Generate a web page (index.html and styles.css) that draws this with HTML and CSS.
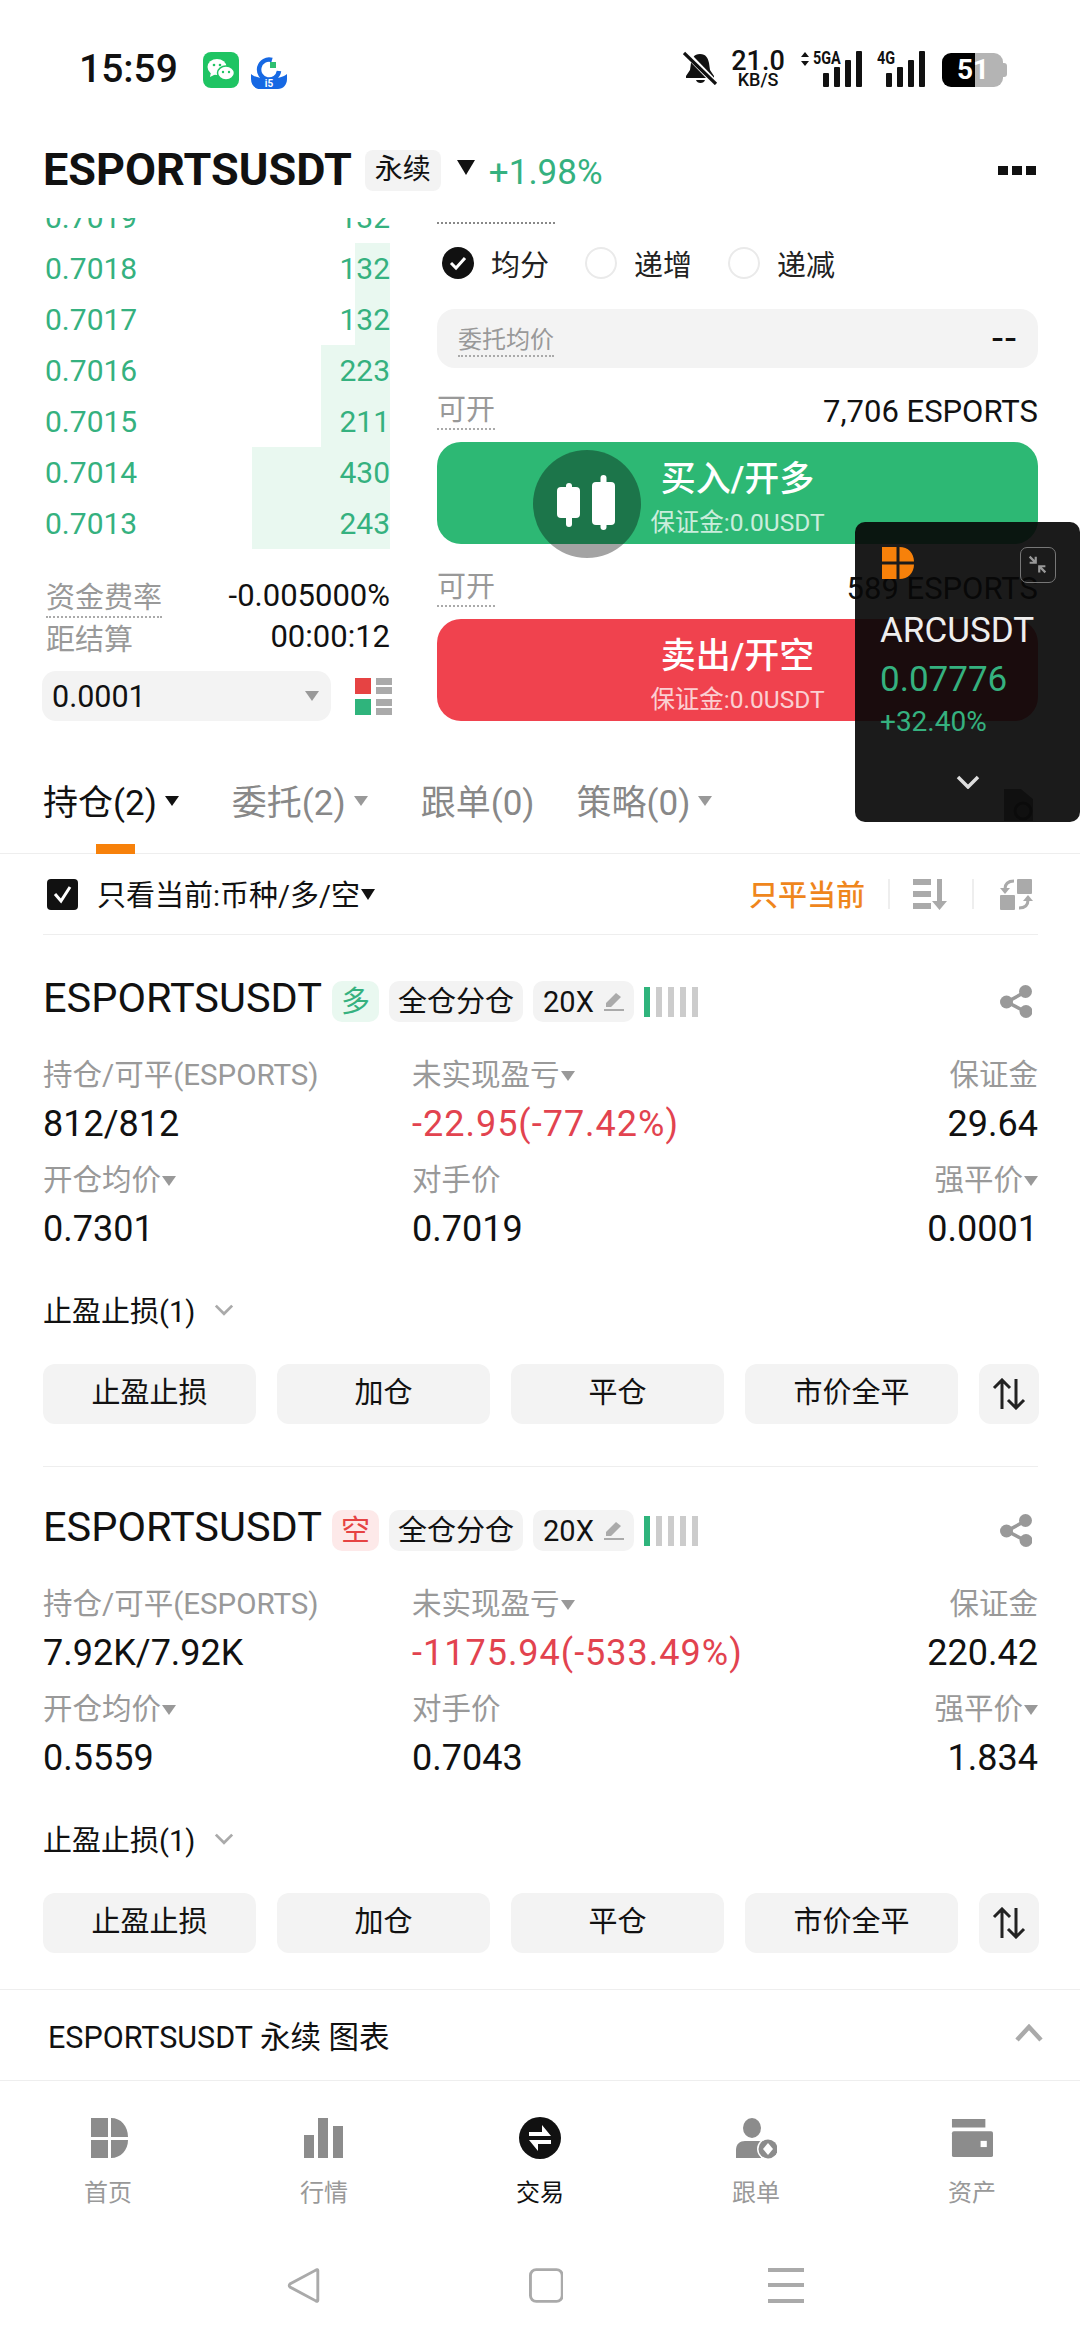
FILE: index.html
```html
<!DOCTYPE html>
<html lang="zh-CN">
<head>
    <meta charset="UTF-8">
    <meta name="viewport" content="width=device-width, initial-scale=1.0">
    <title>ESPORTSUSDT 永续</title>
    <link rel="stylesheet" href="styles.css">
</head>
<body>
<div id="page">

    <!-- 状态栏 -->
    <div class="status">
        <span class="clock">15:59</span>
        <svg class="app-wechat" viewBox="0 0 36 36">
            <rect width="36" height="36" rx="8" fill="#1fc463"/>
            <ellipse cx="14" cy="15" rx="9.5" ry="8" fill="#fff"/>
            <path d="M8 20l-1 5 6-3z" fill="#fff"/>
            <ellipse cx="23" cy="21" rx="8.5" ry="7" fill="#fff" stroke="#1fc463" stroke-width="1.5"/>
            <circle cx="11" cy="13" r="1.3" fill="#1fc463"/>
            <circle cx="17" cy="13" r="1.3" fill="#1fc463"/>
            <circle cx="20" cy="20" r="1.2" fill="#1fc463"/>
            <circle cx="26" cy="20" r="1.2" fill="#1fc463"/>
        </svg>
        <svg class="app-blue" viewBox="0 0 36 32">
            <path d="M21 3a10 10 0 1 0 7 11" fill="none" stroke="#1668e3" stroke-width="4.5"/>
            <rect x="19" y="5" width="6" height="6" fill="#2fbf71"/>
            <path d="M0 17c6 6 30 6 36 0v5c0 6-4 10-9 10H9c-5 0-9-4-9-10z" fill="#1668e3"/>
            <text x="18" y="30" text-anchor="middle" class="app-blue-txt">i5</text>
        </svg>
        <div class="status-right">
            <svg class="ic-bell" viewBox="0 0 35 34">
                <path d="M17 3c-6 0-8 4-9 9l-1 7-4 6v2h28v-2l-4-6-1-7c-1-5-3-9-9-9z" fill="#111"/>
                <path d="M13 29h9c-1 4-8 4-9 0z" fill="#111"/>
                <path d="M2 1l31 32" stroke="#fff" stroke-width="6"/>
                <path d="M1 2l32 31" stroke="#111" stroke-width="3.2"/>
            </svg>
            <div class="speed"><b>21.0</b><span>KB/S</span></div>
            <div class="signal sig-5g">
                <svg class="sig-arrows" viewBox="0 0 10 14"><path d="M5 0l4 5H1zM5 14L1 9h8z" fill="#111"/></svg>
                <span class="sig-name">5GA</span>
                <i class="b1"></i><i class="b2"></i><i class="b3"></i><i class="b4"></i>
            </div>
            <div class="signal sig-4g">
                <span class="sig-name">4G</span>
                <i class="b1"></i><i class="b2"></i><i class="b3"></i><i class="b4"></i>
            </div>
            <div class="battery"><span>51</span></div>
        </div>
    </div>

    <!-- 合约标题 -->
    <div class="head">
        <h1 class="symbol">ESPORTSUSDT</h1>
        <span class="perp">永续</span>
        <i class="tri tri-head"></i>
        <span class="change">+1.98%</span>
        <div class="more"><i></i><i></i><i></i></div>
    </div>

    <!-- 盘口和下单 -->
    <div class="trade">
        <div class="left">
            <div class="book">
                <div class="row"><span>0.7019</span><span>132</span></div>
                <div class="row"><i class="depth" style="width:35px"></i><span>0.7018</span><span>132</span></div>
                <div class="row"><i class="depth" style="width:35px"></i><span>0.7017</span><span>132</span></div>
                <div class="row"><i class="depth" style="width:69px"></i><span>0.7016</span><span>223</span></div>
                <div class="row"><i class="depth" style="width:69px"></i><span>0.7015</span><span>211</span></div>
                <div class="row"><i class="depth" style="width:138px"></i><span>0.7014</span><span>430</span></div>
                <div class="row"><i class="depth" style="width:138px"></i><span>0.7013</span><span>243</span></div>
            </div>
            <div class="fund fund-rate">
                <span class="dash">资金费率</span><span class="fund-v">-0.005000%</span>
            </div>
            <div class="fund">
                <span class="gray">距结算</span><span class="fund-v">00:00:12</span>
            </div>
            <div class="depth-bar">
                <div class="select"><span>0.0001</span><i class="tri tri-select"></i></div>
                <div class="book-mode">
                    <i class="sq red"></i><i class="lines"></i>
                    <i class="sq green"></i><i class="lines"></i>
                </div>
            </div>
        </div>

        <div class="right">
            <div class="cut-line"></div>
            <div class="radios">
                <div class="radio">
                    <svg class="radio-on" viewBox="0 0 32 32">
                        <circle cx="16" cy="16" r="16" fill="#111"/>
                        <path d="M9 16l5 5 9-10" fill="none" stroke="#fff" stroke-width="3"/>
                    </svg>
                    <span>均分</span>
                </div>
                <div class="radio"><i class="radio-off"></i><span>递增</span></div>
                <div class="radio"><i class="radio-off"></i><span>递减</span></div>
            </div>
            <div class="avg">
                <span class="dash">委托均价</span><span class="avg-val">--</span>
            </div>
            <div class="avail">
                <span class="dash">可开</span><span class="avail-v">7,706 ESPORTS</span>
            </div>
            <div class="action buy">
                <span class="action-title">买入/开多</span>
                <span class="action-sub">保证金:0.0USDT</span>
            </div>
            <div class="avail avail-2">
                <span class="dash">可开</span><span class="avail-v">589 ESPORTS</span>
            </div>
            <div class="action sell">
                <span class="action-title">卖出/开空</span>
                <span class="action-sub">保证金:0.0USDT</span>
            </div>
        </div>
    </div>

    <!-- 持仓切换 -->
    <div class="tabs">
        <div class="tab on">持仓(2)<i class="tri tri-tab"></i></div>
        <div class="tab">委托(2)<i class="tri tri-tab"></i></div>
        <div class="tab">跟单(0)</div>
        <div class="tab">策略(0)<i class="tri tri-tab"></i></div>
        <svg class="ic-doc" viewBox="0 0 29 32">
            <path d="M0 0h17l12 10v22H0z" fill="#777"/>
            <circle cx="19" cy="22" r="8" fill="none" stroke="#333" stroke-width="3"/>
        </svg>
        <i class="tab-mark"></i>
    </div>

    <div class="filter">
        <svg class="check" viewBox="0 0 31 31">
            <rect width="31" height="31" rx="4" fill="#111"/>
            <path d="M8 15l6 7 9-14" fill="none" stroke="#fff" stroke-width="3"/>
        </svg>
        <span class="filter-txt">只看当前:币种/多/空</span>
        <i class="tri tri-filter"></i>
        <span class="close-cur">只平当前</span>
        <i class="vline"></i>
        <svg class="ic-sort" viewBox="0 0 34 31">
            <path d="M0 0h18v6H0zM0 12h18v6H0zM0 24h18v6H0z" fill="#aaa"/>
            <path d="M24 0h5v22h5l-7.500 9-7.500-9h5z" fill="#aaa"/>
        </svg>
        <i class="vline vline-2"></i>
        <svg class="ic-swap" viewBox="0 0 33 31">
            <rect x="17" y="0" width="15" height="15" rx="1" fill="#aaa"/>
            <rect x="0" y="16" width="15" height="15" rx="1" fill="#aaa"/>
            <path d="M14 2C8 2 5 5 5 10" fill="none" stroke="#aaa" stroke-width="3"/>
            <path d="M0 9h10l-5 6z" fill="#aaa"/>
            <path d="M19 29c6 0 9-3 9-8" fill="none" stroke="#aaa" stroke-width="3"/>
            <path d="M23 22h10l-5-6z" fill="#aaa"/>
        </svg>
    </div>

    <!-- 多单 -->
    <div class="card card-line">
        <div class="card-top">
            <span class="card-symbol">ESPORTSUSDT</span>
            <span class="tag long">多</span>
            <span class="tag">全仓分仓</span>
            <span class="tag tag-lev">20X
                <svg class="ic-pen" viewBox="0 0 20 18"><path d="M12 0l5 4L7 14H2v-4zM0 16h20v2H0z" fill="#aaa"/></svg>
            </span>
            <div class="adl"><i class="on"></i><i></i><i></i><i></i><i></i></div>
            <svg class="ic-share" viewBox="0 0 32 33">
                <path d="M25 7L7 17l19 10" fill="none" stroke="#999" stroke-width="3.500"/>
                <circle cx="25.500" cy="6.500" r="6.500" fill="#999"/>
                <circle cx="6.500" cy="17" r="6.500" fill="#999"/>
                <circle cx="26" cy="26.500" r="6.500" fill="#999"/>
            </svg>
        </div>
        <div class="stats">
            <div class="stat"><span class="stat-k">持仓/可平(ESPORTS)</span><span class="stat-v">812/812</span></div>
            <div class="stat"><span class="stat-k">未实现盈亏<i class="tri tri-k"></i></span><span class="stat-v loss">-22.95(-77.42%)</span></div>
            <div class="stat stat-r"><span class="stat-k">保证金</span><span class="stat-v">29.64</span></div>
            <div class="stat"><span class="stat-k">开仓均价<i class="tri tri-k"></i></span><span class="stat-v">0.7301</span></div>
            <div class="stat"><span class="stat-k">对手价</span><span class="stat-v">0.7019</span></div>
            <div class="stat stat-r"><span class="stat-k">强平价<i class="tri tri-k"></i></span><span class="stat-v">0.0001</span></div>
        </div>
        <div class="tpsl">止盈止损(1)
            <svg class="ic-down" viewBox="0 0 18 11"><path d="M1.500 1.500L9 9l7.500-7.500" fill="none" stroke="#aaa" stroke-width="2.500"/></svg>
        </div>
        <div class="btns">
            <span class="btn">止盈止损</span>
            <span class="btn">加仓</span>
            <span class="btn">平仓</span>
            <span class="btn">市价全平</span>
            <span class="btn btn-flip">
                <svg viewBox="0 0 34 32"><path d="M10 31V2M2 10l8-8 8 8M24 1v29M16 22l8 8 8-8" fill="none" stroke="#222" stroke-width="3"/></svg>
            </span>
        </div>
    </div>

    <!-- 空单 -->
    <div class="card">
        <div class="card-top">
            <span class="card-symbol">ESPORTSUSDT</span>
            <span class="tag short">空</span>
            <span class="tag">全仓分仓</span>
            <span class="tag tag-lev">20X
                <svg class="ic-pen" viewBox="0 0 20 18"><path d="M12 0l5 4L7 14H2v-4zM0 16h20v2H0z" fill="#aaa"/></svg>
            </span>
            <div class="adl"><i class="on"></i><i></i><i></i><i></i><i></i></div>
            <svg class="ic-share" viewBox="0 0 32 33">
                <path d="M25 7L7 17l19 10" fill="none" stroke="#999" stroke-width="3.500"/>
                <circle cx="25.500" cy="6.500" r="6.500" fill="#999"/>
                <circle cx="6.500" cy="17" r="6.500" fill="#999"/>
                <circle cx="26" cy="26.500" r="6.500" fill="#999"/>
            </svg>
        </div>
        <div class="stats">
            <div class="stat"><span class="stat-k">持仓/可平(ESPORTS)</span><span class="stat-v">7.92K/7.92K</span></div>
            <div class="stat"><span class="stat-k">未实现盈亏<i class="tri tri-k"></i></span><span class="stat-v loss">-1175.94(-533.49%)</span></div>
            <div class="stat stat-r"><span class="stat-k">保证金</span><span class="stat-v">220.42</span></div>
            <div class="stat"><span class="stat-k">开仓均价<i class="tri tri-k"></i></span><span class="stat-v">0.5559</span></div>
            <div class="stat"><span class="stat-k">对手价</span><span class="stat-v">0.7043</span></div>
            <div class="stat stat-r"><span class="stat-k">强平价<i class="tri tri-k"></i></span><span class="stat-v">1.834</span></div>
        </div>
        <div class="tpsl">止盈止损(1)
            <svg class="ic-down" viewBox="0 0 18 11"><path d="M1.500 1.500L9 9l7.500-7.500" fill="none" stroke="#aaa" stroke-width="2.500"/></svg>
        </div>
        <div class="btns">
            <span class="btn">止盈止损</span>
            <span class="btn">加仓</span>
            <span class="btn">平仓</span>
            <span class="btn">市价全平</span>
            <span class="btn btn-flip">
                <svg viewBox="0 0 34 32"><path d="M10 31V2M2 10l8-8 8 8M24 1v29M16 22l8 8 8-8" fill="none" stroke="#222" stroke-width="3"/></svg>
            </span>
        </div>
    </div>

    <div class="chart-row">
        <span>ESPORTSUSDT 永续 图表</span>
        <svg class="ic-up" viewBox="0 0 28 18"><path d="M2 16L14 3l12 13" fill="none" stroke="#aaa" stroke-width="4.500"/></svg>
    </div>

    <!-- 底部导航 -->
    <div class="nav">
        <div class="nav-item">
            <svg class="nav-ic" viewBox="-2 0 42 42">
                <path d="M2 1h17v19H2zM22 1c10 0 17 8 17 19H22zM2 23h17v18H2zM22 23h17c0 10-7 18-17 18z" fill="#8c8c8c"/>
            </svg>
            <span>首页</span>
        </div>
        <div class="nav-item">
            <svg class="nav-ic" viewBox="0 0 42 42">
                <path d="M1 18h10v23H1zM15 1h10v40H15zM30 9h10v32H30z" fill="#8c8c8c"/>
            </svg>
            <span>行情</span>
        </div>
        <div class="nav-item on">
            <svg class="nav-ic" viewBox="0 0 42 42">
                <circle cx="21" cy="21" r="21" fill="#111"/>
                <path d="M10 19v-4h13V8l9 11zM32 23v4H19v7l-9-11z" fill="#fff"/>
            </svg>
            <span>交易</span>
        </div>
        <div class="nav-item">
            <svg class="nav-ic" viewBox="0 0 42 42">
                <ellipse cx="17" cy="11" rx="9" ry="10" fill="#8c8c8c"/>
                <path d="M1 41V33c0-6 4-9 9-9h16v17z" fill="#8c8c8c"/>
                <circle cx="33" cy="32" r="11" fill="#fff"/>
                <circle cx="33" cy="32" r="9.500" fill="#8c8c8c"/>
                <path d="M33 26l5 6-5 6-5-6z" fill="#fff"/>
            </svg>
            <span>跟单</span>
        </div>
        <div class="nav-item">
            <svg class="nav-ic" viewBox="0 0 44 42">
                <path d="M1 1h35v9H1z" fill="#8c8c8c"/>
                <path d="M3 14h39a2 2 0 0 1 2 2v23a2 2 0 0 1-2 2H3a2 2 0 0 1-2-2V16a2 2 0 0 1 2-2z" fill="#8c8c8c"/>
                <rect x="31" y="24" width="6.500" height="6.500" fill="#fff"/>
            </svg>
            <span>资产</span>
        </div>
    </div>

    <!-- 系统按键 -->
    <div class="keys">
        <svg class="key key-back" viewBox="0 0 36 36"><path d="M32 2.500v31a1 1 0 0 1-1.700.7L3 19.500a2 2 0 0 1 0-3L30.300 1.800a1 1 0 0 1 1.700.7z" fill="none" stroke="#aaa" stroke-width="3"/></svg>
        <svg class="key key-home" viewBox="0 0 36 36"><rect x="1.500" y="1.500" width="33" height="33" rx="6" fill="none" stroke="#aaa" stroke-width="3"/></svg>
        <div class="key-menu"><i></i><i></i><i></i></div>
    </div>

    <!-- 悬浮K线按钮 -->
    <div class="float-btn">
        <svg viewBox="0 0 60 58">
            <rect x="9" y="8" width="6" height="44" rx="3" fill="#fff"/>
            <rect x="0" y="12" width="23" height="31" rx="4" fill="#fff"/>
            <rect x="43.500" y="0" width="6" height="55" rx="3" fill="#fff"/>
            <rect x="35" y="7" width="23" height="43" rx="4" fill="#fff"/>
        </svg>
    </div>

    <!-- 悬浮行情窗 -->
    <div class="ticker">
        <div class="ticker-top">
            <svg class="ticker-logo" viewBox="0 0 32 32">
                <path d="M0 0h14.500v14.500H0zM17.500 0C26 0 32 6 32 14.500H17.500zM0 17.500h14.500V32H0zM17.500 17.500H32C32 26 26 32 17.500 32z" fill="#f7810a"/>
            </svg>
            <div class="ticker-shrink">
                <svg viewBox="0 0 24 24"><path d="M3 3l6 6M10 3v7H3M21 21l-6-6M14 21v-7h7" fill="none" stroke="#999" stroke-width="2.500"/></svg>
            </div>
        </div>
        <div class="ticker-name">ARCUSDT</div>
        <div class="ticker-price">0.07776</div>
        <div class="ticker-pct">+32.40%</div>
        <svg class="ticker-down" viewBox="0 0 24 14"><path d="M2 2l10 10L22 2" fill="none" stroke="#ddd" stroke-width="3.500"/></svg>
    </div>
</div>
</body>
</html>
```

FILE: styles.css
```css
*{
    margin: 0;
    padding: 0;
    box-sizing: border-box;
}
body{
    width: 1080px;
    height: 2352px;
    background: #fff;
    font-family: Roboto, "Noto Sans CJK SC", sans-serif;
    color: #111;
    overflow: hidden;
}
i{
    display: block;
    font-style: normal;
}
#page{
    width: 1080px;
    height: 2352px;
    position: relative;
    overflow: hidden;
}
.tri{
    width: 0;
    height: 0;
    border-style: solid;
    border-color: #111 transparent transparent transparent;
}

/* status bar */
.status{
    height: 130px;
    padding: 6px 73px 0 79px;
    display: flex;
    align-items: center;
}
.clock{
    font-size: 39px;
    font-weight: 500;
    width: 124px;
    margin-top: 2px;
}
.app-wechat{
    width: 36px;
    height: 36px;
    margin-top: 4px;
}
.app-blue{
    width: 36px;
    height: 32px;
    margin: 9px 0 0 12px;
}
.app-blue-txt{
    font: 700 10px Roboto, sans-serif;
    fill: #fff;
}
.status-right{
    margin-left: auto;
    display: flex;
    align-items: center;
}
.ic-bell{
    width: 35px;
    height: 34px;
}
.speed{
    width: 50px;
    margin-left: 15px;
    display: flex;
    flex-direction: column;
    align-items: center;
}
.speed b{
    font-size: 27px;
    font-weight: 500;
    height: 24px;
    line-height: 24px;
}
.speed span{
    font-size: 18px;
    font-weight: 500;
    height: 14px;
    line-height: 14px;
}
.signal{
    height: 36px;
    margin-top: 2px;
    display: flex;
    align-items: flex-end;
    position: relative;
    gap: 5px;
    padding-left: 23px;
}
.signal i{
    width: 6px;
    background: #111;
    border-radius: 1px;
}
.signal .b1{ height: 14px; }
.signal .b2{ height: 20px; }
.signal .b3{ height: 27px; }
.signal .b4{ height: 36px; }
.sig-5g{
    margin-left: 17px;
}
.sig-4g{
    margin-left: 15px;
    padding-left: 9px;
}
.sig-arrows{
    position: absolute;
    left: 0;
    top: 1px;
    width: 10px;
    height: 14px;
}
.sig-name{
    position: absolute;
    top: -1px;
    left: 13px;
    font-size: 18px;
    font-weight: 700;
    line-height: 16px;
    transform-origin: left top;
    transform: scaleX(.8);
}
.sig-4g .sig-name{
    left: 0;
}
.battery{
    width: 61px;
    height: 34px;
    margin: 4px 4px 0 17px;
    border-radius: 9px;
    background: linear-gradient(90deg, #000 0, #000 33px, #b4b4b4 33px);
    position: relative;
    color: #fff;
    font-size: 28px;
    font-weight: 700;
    line-height: 34px;
    padding-left: 15px;
}
.battery::after{
    content: "";
    position: absolute;
    right: -4px;
    top: 10px;
    width: 4px;
    height: 14px;
    border-radius: 0 3px 3px 0;
    background: #b4b4b4;
}

/* symbol head */
.head{
    height: 88px;
    padding: 0 44px 8px 43px;
    display: flex;
    align-items: center;
}
.symbol{
    font-size: 45px;
    font-weight: 700;
    line-height: 50px;
}
.perp{
    width: 76px;
    height: 41px;
    margin-left: 13px;
    background: #f3f3f3;
    border-radius: 8px;
    font-size: 28px;
    line-height: 40px;
    text-align: center;
}
.tri-head{
    margin-left: 16px;
    margin-top: -6px;
    border-width: 15px 9px 0 9px;
}
.change{
    margin-left: 14px;
    margin-top: 5px;
    color: #35b17f;
    font-size: 35px;
    font-weight: 400;
}
.more{
    margin-left: auto;
    display: flex;
    gap: 4px;
}
.more i{
    width: 10px;
    height: 9px;
    background: #111;
}

/* order book and order form */
.trade{
    height: 542px;
    padding-left: 43px;
    display: grid;
    grid-template-columns: 347px 601px;
    column-gap: 47px;
    overflow: hidden;
}
.book{
    margin-top: -26px;
}
.row{
    height: 51px;
    padding-left: 2px;
    display: flex;
    justify-content: space-between;
    align-items: center;
    position: relative;
    color: #35b17f;
    font-size: 30px;
}
.row span{
    position: relative;
}
.depth{
    position: absolute;
    right: 0;
    top: 0;
    bottom: 0;
    background: #e9f8f0;
}
.fund{
    height: 41px;
    padding-left: 3px;
    display: flex;
    justify-content: space-between;
    align-items: center;
    font-size: 29px;
}
.fund-v{
    font-size: 31px;
}
.fund-rate{
    margin-top: 26px;
}
.gray{
    color: #999;
}
.dash{
    color: #999;
    border-bottom: 2px dotted #aaa;
}
.depth-bar{
    margin-top: 14px;
    display: flex;
    align-items: center;
    justify-content: space-between;
    margin-left: -1px;
    margin-right: -2px;
}
.select{
    width: 289px;
    height: 50px;
    background: #f3f3f3;
    border-radius: 14px;
    padding: 0 12px 0 10px;
    display: flex;
    align-items: center;
    justify-content: space-between;
    font-size: 30.500px;
}
.tri-select{
    border-width: 10px 7px 0 7px;
    border-top-color: #999;
}
.book-mode{
    width: 37px;
    display: grid;
    grid-template-columns: 16px 16px;
    grid-template-rows: 16px 16px;
    gap: 5px;
}
.sq.red{ background: #e64343; }
.sq.green{ background: #2fb47c; }
.lines{
    background: linear-gradient(#aaa 0, #aaa 7px, #fff 7px, #fff 9px, #aaa 9px);
}

.cut-line{
    margin-top: 4px;
    width: 118px;
    height: 2px;
    border-top: 2px dotted #888;
}
.radios{
    margin-top: 17px;
    height: 44px;
    padding-left: 5px;
    display: flex;
    align-items: center;
    font-size: 29px;
}
.radio{
    width: 143px;
    display: flex;
    align-items: center;
    gap: 17px;
    color: #222;
}
.radio-on{
    width: 32px;
    height: 32px;
}
.radio-off{
    width: 32px;
    height: 32px;
    border: 2px solid #eaeaea;
    border-radius: 50%;
}
.avg{
    margin-top: 24px;
    height: 59px;
    padding: 0 20px 0 21px;
    background: #f3f3f3;
    border-radius: 18px;
    display: flex;
    justify-content: space-between;
    align-items: center;
    font-size: 24px;
}
.avg-val{
    font-size: 40px;
    line-height: 40px;
    letter-spacing: 2px;
}
.avail{
    margin-top: 24px;
    height: 38px;
    display: flex;
    justify-content: space-between;
    align-items: flex-end;
    font-size: 29px;
    line-height: 36px;
}
.avail-2{
    margin-top: 25px;
}
.avail-v{
    font-size: 31px;
}
.action{
    margin-top: 12px;
    height: 102px;
    padding-top: 16px;
    border-radius: 24px;
    color: #fff;
    display: flex;
    flex-direction: column;
    align-items: center;
}
.action-title{
    font-size: 35px;
    font-weight: 500;
    line-height: 43px;
}
.action-sub{
    font-size: 24.500px;
    line-height: 43px;
    opacity: .75;
}
.buy{ background: #2db874; }
.sell{ background: #f0424e; }

/* position tabs */
.tabs{
    height: 94px;
    padding: 0 47px 15px 43px;
    border-bottom: 1.5px solid #eee;
    display: flex;
    align-items: center;
    gap: 42px;
    position: relative;
    font-size: 35px;
    color: #888;
}
.tab{
    display: flex;
    align-items: center;
}
.tab.on{
    color: #111;
}
.tri-tab{
    margin: 4px 11px 0 8px;
    border-width: 10px 7px 0 7px;
    border-top-color: #999;
}
.tab.on .tri-tab{
    border-top-color: #111;
}
.ic-doc{
    margin-left: auto;
    width: 29px;
    height: 32px;
    margin-top: 11px;
}
.tab-mark{
    position: absolute;
    left: 96px;
    bottom: -1px;
    width: 39px;
    height: 10px;
    background: #f7810a;
}
.filter{
    height: 81px;
    margin: 0 42px 3px 43px;
    padding: 0 5px 0 4px;
    border-bottom: 1.5px solid #eee;
    display: flex;
    align-items: center;
    font-size: 29px;
}
.check{
    width: 31px;
    height: 31px;
}
.filter-txt{
    margin: -3px 0 0 19px;
}
.tri-filter{
    margin: 1px 0 0 1px;
    border-width: 11px 7px 0 7px;
}
.close-cur{
    margin: -2px 0 0 auto;
    color: #ef861c;
    font-weight: 500;
    font-size: 29px;
}
.vline{
    width: 2px;
    height: 30px;
    margin: 0 23px;
    background: #eee;
}
.vline-2{
    margin: 0 26px 0 25px;
}
.ic-sort{
    width: 34px;
    height: 31px;
}
.ic-swap{
    width: 33px;
    height: 31px;
}

/* position cards */
.card{
    margin: 0 42px 0 43px;
    padding: 43px 0 36px;
}
.card-line{
    padding-bottom: 42px;
    border-bottom: 1.5px solid #eee;
}
.card-top{
    height: 41px;
    display: flex;
    align-items: center;
}
.card-symbol{
    font-size: 41.500px;
    margin-top: -8px;
}
.tag{
    height: 41px;
    margin-left: 10px;
    padding: 0 9px;
    background: #f3f3f3;
    border-radius: 10px;
    font-size: 29px;
    line-height: 40px;
    display: flex;
    align-items: center;
}
.long{
    color: #35b17f;
    background: #e9f8f0;
}
.short{
    color: #e64343;
    background: #fde9e9;
}
.tag-lev{
    padding: 0 10px;
    gap: 10px;
}
.ic-pen{
    width: 20px;
    height: 18px;
}
.adl{
    display: flex;
    gap: 6px;
    margin-left: 10px;
}
.adl i{
    width: 6px;
    height: 30px;
    background: #ccc;
}
.adl .on{
    background: #2fb47c;
}
.ic-share{
    margin-left: auto;
    margin-right: 6px;
    width: 32px;
    height: 33px;
}
.stats{
    margin-top: 33px;
    display: grid;
    grid-template-columns: 369px 1fr auto;
    row-gap: 14px;
}
.stat{
    display: flex;
    flex-direction: column;
    gap: 7px;
}
.stat-r{
    align-items: flex-end;
}
.stat-k{
    height: 40px;
    line-height: 40px;
    font-size: 29.500px;
    color: #999;
    display: flex;
    align-items: center;
}
.stat-v{
    height: 44px;
    line-height: 44px;
    font-size: 36px;
}
.loss{
    color: #e2434f;
    letter-spacing: 1px;
}
.tri-k{
    margin: 2px 0 0 1px;
    border-width: 10px 7px 0 7px;
    border-top-color: #999;
}
.tpsl{
    margin-top: 38px;
    height: 40px;
    display: flex;
    align-items: center;
    font-size: 29px;
    gap: 19px;
}
.ic-down{
    width: 20px;
    height: 12px;
    margin-top: 1px;
}
.btns{
    margin-top: 35px;
    display: grid;
    grid-template-columns: repeat(4, 213px) 60px;
    column-gap: 21px;
}
.btn{
    height: 60px;
    background: #f3f3f3;
    border-radius: 12px;
    font-size: 29px;
    line-height: 58px;
    text-align: center;
}
.btn-flip{
    display: flex;
    align-items: center;
    justify-content: center;
}
.btn-flip svg{
    width: 34px;
    height: 32px;
}
.chart-row{
    height: 92px;
    padding: 0 37px 0 48px;
    border-top: 1.5px solid #eee;
    border-bottom: 1.5px solid #eee;
    display: flex;
    align-items: center;
    justify-content: space-between;
    font-size: 30.500px;
}
.ic-up{
    width: 28px;
    height: 18px;
    margin-top: -5px;
}

/* bottom navigation */
.nav{
    height: 175px;
    padding-top: 36px;
    display: grid;
    grid-template-columns: repeat(5, 216px);
    align-items: start;
}
.nav-item{
    display: flex;
    flex-direction: column;
    align-items: center;
    color: #999;
    font-size: 24px;
}
.nav-item.on{
    color: #111;
}
.nav-ic{
    width: 42px;
    height: 42px;
    margin-bottom: 17px;
}
.nav-item span{
    line-height: 34px;
}
.keys{
    height: 58px;
    margin-left: 287px;
    width: 517px;
    display: flex;
    align-items: center;
    justify-content: space-between;
}
.key{
    width: 35px;
    height: 35px;
}
.key-home{
    margin-left: 207px;
    margin-right: 205px;
}
.key-menu{
    width: 36px;
    height: 35px;
    display: flex;
    flex-direction: column;
    justify-content: space-between;
}
.key-menu i{
    height: 4px;
    background: #aaa;
}

/* floating candle button */
.float-btn{
    position: absolute;
    left: 533px;
    top: 450px;
    width: 108px;
    height: 108px;
    border-radius: 50%;
    background: rgba(0,0,0,.36);
    display: flex;
    align-items: center;
    justify-content: center;
}
.float-btn svg{
    width: 60px;
    height: 58px;
}

/* floating ticker window */
.ticker{
    position: absolute;
    left: 855px;
    top: 522px;
    width: 225px;
    height: 300px;
    padding: 25px 24px 0 25px;
    border-radius: 10px;
    background: rgba(8,8,8,.92);
    color: #eee;
}
.ticker-top{
    display: flex;
    justify-content: space-between;
    height: 36px;
}
.ticker-logo{
    width: 32px;
    height: 32px;
    margin-left: 2px;
}
.ticker-shrink{
    width: 36px;
    height: 36px;
    border: 1.5px solid #777;
    border-radius: 7px;
    padding: 6px;
}
.ticker-shrink svg{
    display: block;
    width: 21px;
    height: 21px;
}
.ticker-name{
    margin-top: 26px;
    font-size: 35px;
    line-height: 44px;
}
.ticker-price{
    margin-top: 5px;
    font-size: 35px;
    line-height: 44px;
    color: #35b17f;
}
.ticker-pct{
    font-size: 28px;
    line-height: 40px;
    color: #35b17f;
}
.ticker-down{
    display: block;
    width: 24px;
    height: 14px;
    margin: 33px 0 0 76px;
}
```
